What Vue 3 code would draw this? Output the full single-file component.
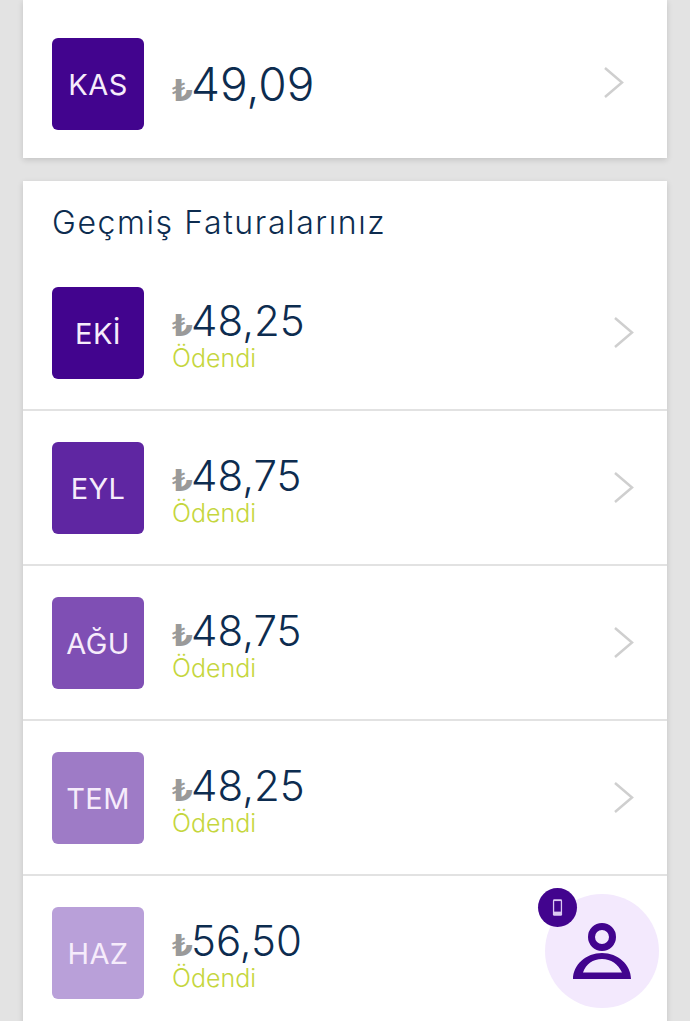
<template>
  <div class="page">
    <section class="card current">
      <div class="row">
        <div class="month" style="background: #42048e">KAS</div>
        <div class="info">
          <div class="amount"><span class="lira">₺</span>49,09</div>
        </div>
        <svg class="chevron" viewBox="0 0 22 34"><path d="M2 2 L19 16.5 L2 31" /></svg>
      </div>
    </section>

    <section class="card past">
      <h2 class="title">Geçmiş Faturalarınız</h2>
      <div v-for="bill in bills" :key="bill.month" class="row">
        <div class="month" :style="{ background: bill.color }">{{ bill.month }}</div>
        <div class="info">
          <div class="amount"><span class="lira">₺</span>{{ bill.amount }}</div>
          <div class="status">Ödendi</div>
        </div>
        <svg class="chevron" viewBox="0 0 22 34"><path d="M2 2 L19 16.5 L2 31" /></svg>
      </div>
    </section>

    <div class="fab">
      <svg class="person" viewBox="0 0 60 57">
        <circle class="head" cx="30" cy="14" r="10.5" />
        <path
          class="body"
          fill-rule="evenodd"
          d="M1 56 C1 42 14 30 30 30 C46 30 59 42 59 56 Z M11 49.5 C14 41 21 36 30 36 C39 36 46 41 50 49.5 Z"
        />
      </svg>
      <div class="badge">
        <svg viewBox="0 0 12 20">
          <rect x="1" y="1" width="10" height="18" rx="1.5" class="phone" />
          <rect x="2.4" y="3" width="7.2" height="11.5" class="screen" />
        </svg>
      </div>
    </div>
  </div>
</template>

<script setup>
const bills = [
  { month: 'EKİ', amount: '48,25', color: '#42048e' },
  { month: 'EYL', amount: '48,75', color: '#5f26a2' },
  { month: 'AĞU', amount: '48,75', color: '#7f4fb4' },
  { month: 'TEM', amount: '48,25', color: '#9e7bc6' },
  { month: 'HAZ', amount: '56,50', color: '#b9a0d9' }
]
</script>

<style>
html,
body {
  margin: 0;
  background: #e3e3e3;
}
</style>

<style scoped>
.page {
  position: relative;
  height: 1021px;
  overflow: hidden;
  padding: 0 23px;
  box-sizing: border-box;
  background: #e3e3e3;
  font-family: Inter, "Open Sans", sans-serif;
}
.card {
  background: #fff;
  box-shadow: 0 2px 6px rgba(0, 0, 0, 0.14);
}
.current {
  height: 158px;
  margin-bottom: 23px;
  padding-top: 38px;
  box-sizing: border-box;
}
.current .row {
  border-bottom: 0;
  padding: 0 42px 0 29px;
  height: 92px;
}
.current .info {
  padding-top: 3px;
}
.current .amount {
  font-size: 46px;
}
.current .chevron {
  margin-bottom: 3px;
}
.title {
  margin: 0;
  height: 75px;
  padding-left: 29px;
  box-sizing: border-box;
  line-height: 84px;
  font-size: 32px;
  font-weight: 300;
  letter-spacing: 1.6px;
  color: #0d2c4f;
}
.row {
  display: flex;
  align-items: center;
  height: 155px;
  box-sizing: border-box;
  padding: 1px 32px 0 29px;
  border-bottom: 2px solid #e2e2e2;
}
.month {
  width: 92px;
  height: 92px;
  flex: none;
  display: flex;
  align-items: center;
  justify-content: center;
  border-radius: 6px;
  color: #f6ecfb;
  font-size: 29px;
  letter-spacing: 0.4px;
}
.info {
  flex: 1;
  margin-left: 28px;
  padding-top: 6px;
}
.amount {
  display: flex;
  align-items: baseline;
  margin-bottom: -3px;
  font-size: 42px;
  font-weight: 300;
  line-height: 42px;
  color: #0d2c4f;
}
.lira {
  width: 19px;
  font-family: "DejaVu Sans", sans-serif;
  font-size: 30px;
  font-weight: 700;
  color: #9a9a9a;
}
.status {
  font-size: 25px;
  font-weight: 300;
  line-height: 28px;
  color: #c5d63d;
}
.chevron {
  width: 22px;
  height: 34px;
  flex: none;
  fill: none;
  stroke: #cfcfcf;
  stroke-width: 2.5;
}
.fab {
  position: absolute;
  left: 545px;
  top: 894px;
  width: 114px;
  height: 114px;
  border-radius: 50%;
  background: #f3e9fd;
}
.person {
  position: absolute;
  left: 27px;
  top: 29px;
  width: 60px;
  height: 57px;
}
.head {
  fill: none;
  stroke: #42048e;
  stroke-width: 7;
}
.body {
  fill: #42048e;
}
.badge {
  position: absolute;
  left: -7px;
  top: -6px;
  width: 39px;
  height: 39px;
  border-radius: 50%;
  background: #42048e;
  display: flex;
  align-items: center;
  justify-content: center;
}
.badge svg {
  width: 11px;
  height: 19px;
}
.phone {
  fill: #dcc9f2;
}
.screen {
  fill: #42048e;
}
</style>
